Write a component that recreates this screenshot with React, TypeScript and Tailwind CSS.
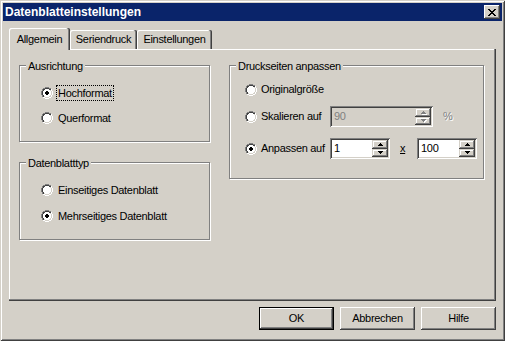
import React from "react";

function Radio({ checked }: { checked?: boolean }) {
  const rects: React.ReactElement[] = [];
  for (let y = 0; y < 12; y++) {
    for (let x = 0; x < 12; x++) {
      const dx = x + 0.5 - 6;
      const dy = y + 0.5 - 6;
      const d = Math.sqrt(dx * dx + dy * dy);
      const tl = x + y <= 11;
      let c: string | null = null;
      if (d <= 4) c = "#ffffff";
      else if (d <= 5) c = tl ? "#404040" : "#d4d0c8";
      else if (d <= 6) c = tl ? "#808080" : "#ffffff";
      if (checked && d < 2) c = "#000000";
      if (c) rects.push(<rect key={`${x}-${y}`} x={x} y={y} width={1} height={1} fill={c} />);
    }
  }
  return (
    <svg width="12" height="12" viewBox="0 0 12 12" shapeRendering="crispEdges" className="shrink-0">
      {rects}
    </svg>
  );
}

function CloseGlyph() {
  const rows = ["XX....XX", ".XX..XX.", "..XXXX..", "...XX...", "..XXXX..", ".XX..XX.", "XX....XX"];
  const rects: React.ReactElement[] = [];
  rows.forEach((r, y) =>
    r.split("").forEach((ch, x) => {
      if (ch === "X") rects.push(<rect key={`${x}-${y}`} x={x} y={y} width={1} height={1} fill="#000" />);
    })
  );
  return (
    <svg width="8" height="7" viewBox="0 0 8 7" shapeRendering="crispEdges">
      {rects}
    </svg>
  );
}

function Arrow({ up, disabled }: { up?: boolean; disabled?: boolean }) {
  const col = disabled ? "#808080" : "#000000";
  const rows = up ? ["..X..", ".XXX.", "XXXXX"] : ["XXXXX", ".XXX.", "..X.."];
  const rects: React.ReactElement[] = [];
  rows.forEach((r, y) =>
    r.split("").forEach((ch, x) => {
      if (ch === "X") {
        if (disabled) rects.push(<rect key={`s${x}-${y}`} x={x + 1} y={y + 1} width={1} height={1} fill="#fff" />);
        rects.push(<rect key={`${x}-${y}`} x={x} y={y} width={1} height={1} fill={col} />);
      }
    })
  );
  return (
    <svg width="6" height="4" viewBox="0 0 6 4" shapeRendering="crispEdges">
      {rects}
    </svg>
  );
}

function SpinBtn({ up, disabled, h }: { up?: boolean; disabled?: boolean; h: string }) {
  return (
    <div
      className={`${h} w-[16px] flex items-center justify-center pl-[1px] bg-[#d4d0c8] shadow-[inset_-1px_-1px_0_#404040,inset_1px_1px_0_#d4d0c8,inset_-2px_-2px_0_#808080,inset_2px_2px_0_#ffffff]`}
    >
      <Arrow up={up} disabled={disabled} />
    </div>
  );
}

function SpinEdit({ value, width, disabled }: { value: string; width: string; disabled?: boolean }) {
  return (
    <div
      className={`${width} h-[21px] flex p-[2px] shadow-[inset_1px_1px_0_#808080,inset_-1px_-1px_0_#ffffff,inset_2px_2px_0_#404040,inset_-2px_-2px_0_#d4d0c8] ${
        disabled ? "bg-[#d4d0c8]" : "bg-white"
      }`}
    >
      <div className={`flex-1 pl-[2px] flex items-center ${disabled ? "text-[#808080]" : "text-black"}`}>{value}</div>
      <div className="flex flex-col">
        <SpinBtn up disabled={disabled} h="h-[9px]" />
        <SpinBtn disabled={disabled} h="h-[8px]" />
      </div>
    </div>
  );
}

function Group({
  label,
  className,
  children,
}: {
  label: string;
  className: string;
  children: React.ReactNode;
}) {
  return (
    <div
      className={`relative border border-[#808080] shadow-[inset_1px_1px_0_#ffffff,1px_1px_0_#ffffff] ${className}`}
    >
      <div className="absolute left-[6px] top-[-6px] px-[2px] bg-[#d4d0c8] whitespace-nowrap">{label}</div>
      {children}
    </div>
  );
}

function RadioRow({ label, checked, focus }: { label: string; checked?: boolean; focus?: boolean }) {
  return (
    <div className="flex items-center h-[16px]">
      <Radio checked={checked} />
      <span
        className={`ml-[3px] px-[1px] border leading-[14px] ${focus ? "border-dotted border-black" : "border-transparent"}`}
      >
        {label}
      </span>
    </div>
  );
}

function Tab({ label, active, w }: { label: string; active?: boolean; w: string }) {
  if (active) {
    return (
      <div
        className={`${w} h-[22px] -mb-px relative z-10 bg-[#d4d0c8] flex justify-center pt-[5px] shadow-[inset_-1px_0_0_#404040,inset_-2px_0_0_#808080,inset_1px_1px_0_#ffffff] rounded-tl-[2px] rounded-tr-[2px]`}
      >
        {label}
      </div>
    );
  }
  return (
    <div
      className={`${w} h-[19px] bg-[#d4d0c8] flex justify-center pt-[3px] shadow-[inset_-1px_0_0_#404040,inset_-2px_0_0_#808080,inset_1px_1px_0_#ffffff] rounded-tl-[2px] rounded-tr-[2px]`}
    >
      {label}
    </div>
  );
}

function Button({ label, def }: { label: string; def?: boolean }) {
  return (
    <div
      className={`w-[75px] h-[23px] flex items-center justify-center bg-[#d4d0c8] ${
        def
          ? "border border-black shadow-[inset_-1px_-1px_0_#404040,inset_1px_1px_0_#ffffff,inset_-2px_-2px_0_#808080]"
          : "shadow-[inset_-1px_-1px_0_#404040,inset_1px_1px_0_#ffffff,inset_-2px_-2px_0_#808080]"
      }`}
    >
      {label}
    </div>
  );
}

export default function App() {
  return (
    <div className="w-[505px] h-[341px] bg-[#d4d0c8] p-[3px] flex flex-col shadow-[inset_1px_1px_0_#d4d0c8,inset_-1px_-1px_0_#404040,inset_2px_2px_0_#ffffff,inset_-2px_-2px_0_#808080] font-['Liberation_Sans',Arial,sans-serif] text-[11px] tracking-[-0.3px] leading-[13px] text-black select-none">
      <div className="h-[18px] bg-[#0a246a] flex items-center justify-between pl-[2px] pr-[2px]">
        <span className="text-white font-bold text-[12px] tracking-normal">Datenblatteinstellungen</span>
        <div className="w-[16px] h-[14px] bg-[#d4d0c8] flex items-center justify-center pr-[1px] shadow-[inset_-1px_-1px_0_#404040,inset_1px_1px_0_#ffffff,inset_-2px_-2px_0_#808080]">
          <CloseGlyph />
        </div>
      </div>

      <div className="mt-[7px] ml-[6px] flex items-end h-[21px]">
        <Tab label="Allgemein" active w="w-[61px]" />
        <Tab label="Seriendruck" w="w-[67px]" />
        <Tab label="Einstellungen" w="w-[75px]" />
      </div>

      <div className="ml-[6px] w-[487px] h-[252px] shadow-[inset_-1px_-1px_0_#404040,inset_-2px_-2px_0_#808080,inset_1px_1px_0_#ffffff]">
        <div className="flex gap-[19px] pl-[10px] pt-[16px]">
          <div className="flex flex-col gap-[20px]">
            <Group label="Ausrichtung" className="w-[191px] h-[77px] pl-[21px] pt-[19px]">
              <div className="flex flex-col gap-[9px]">
                <RadioRow label="Hochformat" checked focus />
                <RadioRow label="Querformat" />
              </div>
            </Group>
            <Group label="Datenblatttyp" className="w-[191px] h-[78px] pl-[21px] pt-[19px]">
              <div className="flex flex-col gap-[10px]">
                <RadioRow label="Einseitiges Datenblatt" />
                <RadioRow label="Mehrseitiges Datenblatt" checked />
              </div>
            </Group>
          </div>

          <Group label="Druckseiten anpassen" className="w-[255px] h-[114px] pl-[15px] pt-[13px]">
            <div className="flex items-center h-[21px]">
              <Radio />
              <span className="ml-[4px]">Originalgröße</span>
            </div>
            <div className="flex items-center h-[21px] mt-[6px]">
              <div className="w-[85px] flex items-center">
                <Radio />
                <span className="ml-[4px]">Skalieren auf</span>
              </div>
              <SpinEdit value="90" width="w-[103px]" disabled />
              <span className="ml-[10px] text-[#808080] [text-shadow:1px_1px_0_#ffffff]">%</span>
            </div>
            <div className="flex items-center h-[21px] mt-[11px]">
              <div className="w-[85px] flex items-center">
                <Radio checked />
                <span className="ml-[4px]">Anpassen auf</span>
              </div>
              <SpinEdit value="1" width="w-[60px]" />
              <span className="ml-[10px] w-[7px] underline">x</span>
              <SpinEdit value="100" width="w-[60px] ml-[10px]" />
            </div>
          </Group>
        </div>
      </div>

      <div className="mt-[6px] flex justify-end gap-[6px] pr-[6px]">
        <Button label="OK" def />
        <Button label="Abbrechen" />
        <Button label="Hilfe" />
      </div>
    </div>
  );
}
